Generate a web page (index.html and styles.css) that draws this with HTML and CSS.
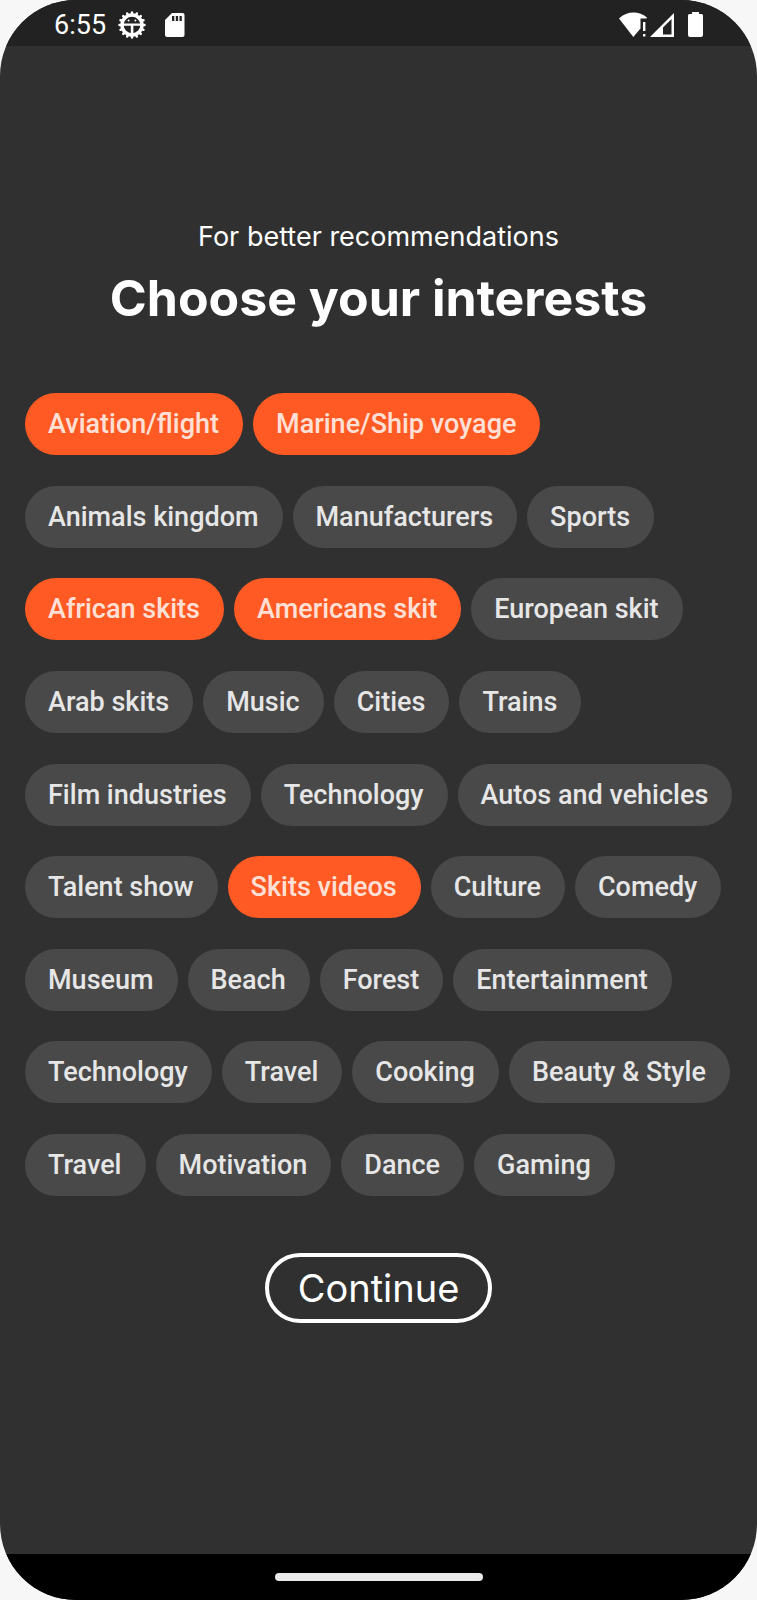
FILE: index.html
```html
<!DOCTYPE html>
<html lang="en">
<head>
<meta charset="utf-8">
<meta name="viewport" content="width=device-width, initial-scale=1">
<title>Choose your interests</title>
<link rel="stylesheet" href="styles.css">
</head>
<body>
<div class="phone">
  <header class="status">
    <span class="time">6:55</span>
    <svg class="gear" viewBox="0 0 28 28" width="28" height="28" aria-hidden="true">
      <circle cx="14" cy="14" r="10" fill="none" stroke="#fff" stroke-width="3.400"/>
      <path d="M14 1.500V4M14 24v2.500M1.500 14H4M24 14h2.500M5.200 5.200L7 7M21 21l1.800 1.800M22.800 5.200L21 7M7 21l-1.800 1.800M9.200 2.500l1 2.300M17.800 23.200l1 2.300M18.800 2.500l-1 2.300M10.200 23.200l-1 2.300M2.500 9.200l2.300 1M23.200 17.800l2.300 1M25.500 9.200l-2.300 1M4.800 17.800l-2.300 1" stroke="#fff" stroke-width="2.500" stroke-linecap="round"/>
      <path d="M5 12.400h18v2.400H5zM12.800 14h2.600v9h-2.600z" fill="#fff"/>
      <circle cx="10.600" cy="9.600" r="1" fill="#fff"/>
      <circle cx="17.400" cy="9.600" r="1" fill="#fff"/>
    </svg>
    <svg class="card" viewBox="0 0 20 24" width="20" height="24" aria-hidden="true">
      <path d="M7 0h10.500A2 2 0 0 1 19.500 2v20a2 2 0 0 1-2 2H2a2 2 0 0 1-2-2V7z" fill="#fff"/>
      <path d="M7 3h2.300v5H7zM10.800 3h2.300v5h-2.300zM14.500 3h2.300v5h-2.300z" fill="#222"/>
    </svg>
    <svg class="signals" viewBox="0 0 84 26" width="84" height="26" aria-hidden="true">
      <path d="M0 6.500C8-1.200 20-1.200 28 5.500L27.500 6.500H21.500v10L14.300 25z" fill="#fff"/>
      <path d="M24 10h2.400v9H24zM24 22h2.400v2.500H24z" fill="#fff"/>
      <path fill-rule="evenodd" d="M55 1v24H31zM52.500 7L44 15.500v7h8.500z" fill="#fff"/>
      <path d="M73 0h7v2h2.500a1.500 1.500 0 0 1 1.500 1.500v19.500a2 2 0 0 1-2 2H71a2 2 0 0 1-2-2V3.500A1.500 1.500 0 0 1 70.500 2H73z" fill="#fff"/>
    </svg>
  </header>

  <main class="content">
    <p class="subtitle">For better recommendations</p>
    <h1 class="title">Choose your interests</h1>
    <form class="form">
      <div class="chips">
        <label class="chip"><input type="checkbox" checked>Aviation/flight</label>
        <label class="chip"><input type="checkbox" checked>Marine/Ship voyage</label>
        <label class="chip"><input type="checkbox">Animals kingdom</label>
        <label class="chip"><input type="checkbox">Manufacturers</label>
        <label class="chip"><input type="checkbox">Sports</label>
        <label class="chip"><input type="checkbox" checked>African skits</label>
        <label class="chip"><input type="checkbox" checked>Americans skit</label>
        <label class="chip"><input type="checkbox">European skit</label>
        <label class="chip"><input type="checkbox">Arab skits</label>
        <label class="chip"><input type="checkbox">Music</label>
        <label class="chip"><input type="checkbox">Cities</label>
        <label class="chip"><input type="checkbox">Trains</label>
        <label class="chip"><input type="checkbox">Film industries</label>
        <label class="chip"><input type="checkbox">Technology</label>
        <label class="chip"><input type="checkbox">Autos and vehicles</label>
        <label class="chip"><input type="checkbox">Talent show</label>
        <label class="chip"><input type="checkbox" checked>Skits videos</label>
        <label class="chip"><input type="checkbox">Culture</label>
        <label class="chip"><input type="checkbox">Comedy</label>
        <label class="chip"><input type="checkbox">Museum</label>
        <label class="chip"><input type="checkbox">Beach</label>
        <label class="chip"><input type="checkbox">Forest</label>
        <label class="chip"><input type="checkbox">Entertainment</label>
        <label class="chip"><input type="checkbox">Technology</label>
        <label class="chip"><input type="checkbox">Travel</label>
        <label class="chip"><input type="checkbox">Cooking</label>
        <label class="chip"><input type="checkbox">Beauty &amp; Style</label>
        <label class="chip"><input type="checkbox">Travel</label>
        <label class="chip"><input type="checkbox">Motivation</label>
        <label class="chip"><input type="checkbox">Dance</label>
        <label class="chip"><input type="checkbox">Gaming</label>
      </div>
      <button class="continue" type="button">Continue</button>
    </form>
  </main>

  <footer class="navbar"><span class="handle"></span></footer>
</div>
</body>
</html>
```
FILE: styles.css
```css
* { box-sizing: border-box; }

body {
  margin: 0;
  background: #f7f7f7;
  font-family: Roboto, sans-serif;
  color: #fff;
}

.phone {
  display: flex;
  flex-direction: column;
  min-height: 100vh;
  border-radius: 76px;
  overflow: hidden;
  background: #303030;
}

.status {
  display: flex;
  align-items: center;
  height: 46px;
  padding: 4px 54px 0;
  background: #222;
}

.time {
  font-size: 27px;
  line-height: 32px;
}

.gear { margin-left: 12px; }
.card { margin-left: 19px; }
.signals { margin-left: auto; }

.content {
  flex: 1;
  display: flex;
  flex-direction: column;
  align-items: center;
  padding: 174px 24px 0;
}

.subtitle {
  margin: 0;
  font: 400 27px/34px Inter, sans-serif;
}

.title {
  margin: 0;
  padding: 12px 0;
  font: 700 50px/64px Inter, sans-serif;
}

.form {
  display: flex;
  flex-direction: column;
  align-items: center;
  width: 100%;
  padding-top: 51px;
}

.chips {
  display: flex;
  flex-wrap: wrap;
  align-content: space-between;
  column-gap: 10px;
  row-gap: 30px;
  width: 100%;
  min-height: 803px;
  padding-left: 1px;
}

.chip {
  position: relative;
  padding: 0 24px 0 23px;
  border-radius: 31px;
  background: #494949;
  color: #e6e6e6;
  font-size: 27px;
  font-weight: 500;
  line-height: 62px;
  white-space: nowrap;
  cursor: pointer;
}

.chip input {
  position: absolute;
  inset: 0;
  margin: 0;
  opacity: 0;
}

.chip:has(input:checked) {
  background: #ff5a24;
  color: #ffe0d6;
}

.continue {
  margin-top: 57px;
  padding: 0 29px;
  border: 4px solid #fff;
  border-radius: 35px;
  background: transparent;
  color: #fff;
  font: 400 38px/62px Inter, sans-serif;
}

.navbar {
  display: flex;
  align-items: center;
  justify-content: center;
  height: 46px;
  background: #000;
}

.handle {
  width: 208px;
  height: 8px;
  border-radius: 4px;
  background: #eaeaea;
}
```
